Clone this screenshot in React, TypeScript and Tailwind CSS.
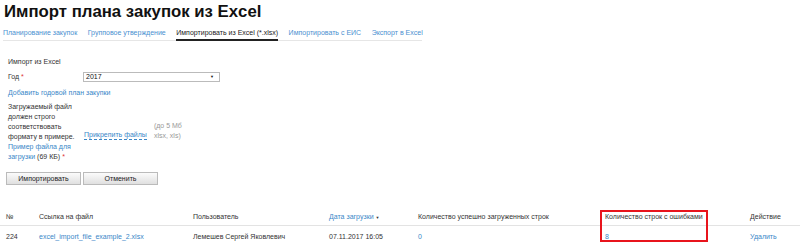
const tabs = [
  { name: 'Планирование закупок', active: false },
  { name: 'Групповое утверждение', active: false },
  { name: 'Импортировать из Excel (*.xlsx)', active: true },
  { name: 'Импортировать с ЕИС', active: false },
  { name: 'Экспорт в Excel', active: false },
]

const cols = ['w-[33px]', 'w-[154px]', 'w-[136px]', 'w-[89px]', 'w-[187px]', 'w-[145px]', 'w-[50px]']

export default function App() {
  return (
    <div className="relative w-[800px] h-[244px] overflow-hidden bg-white font-['Liberation_Sans',Arial,sans-serif] text-[7px] text-[#333]">
      <h1 className="pl-[4px] pt-[2px] text-[16.75px] font-bold leading-[20px] text-[#111]">
        Импорт плана закупок из Excel
      </h1>

      <nav className="mt-[6px] ml-[3px] flex w-[419px] gap-[10.5px] whitespace-nowrap border-b border-[#e6e6e6] leading-[10px]">
        {tabs.map((tab) => (
          <a
            key={tab.name}
            href="#"
            className={
              tab.active
                ? '-mb-px border-b-2 border-[#222] pb-[1px] text-[#222]'
                : 'pb-[2px] text-[#4a90d0]'
            }
          >
            {tab.name}
          </a>
        ))}
      </nav>

      <div className="pl-[8px] pt-[16px] leading-[10px]">
        <div>Импорт из Excel</div>

        <div className="mt-[5px] flex items-center">
          <span className="w-[75px]">
            Год <span className="text-[#d33]">*</span>
          </span>
          <div className="flex h-[10px] w-[137px] items-center justify-between border border-[#bbb] bg-white pl-[2px] pr-[5px] text-[#111]">
            2017
            <span className="text-[4px] leading-none">▼</span>
          </div>
        </div>

        <a href="#" className="mt-[6px] block text-[#3a87c8]">
          Добавить годовой план закупки
        </a>

        <div className="mt-[4px] flex items-center">
          <div className="w-[76px] whitespace-nowrap">
            Загружаемый файл
            <br />
            должен строго
            <br />
            соответствовать
            <br />
            формату в примере.
            <br />
            <a href="#" className="text-[#3a87c8]">
              Пример файла для
              <br />
              загрузки
            </a>{' '}
            (69 КБ) <span className="text-[#d33]">*</span>
          </div>
          <a href="#" className="mt-[6px] whitespace-nowrap border-b border-dashed border-[#3a87c8] leading-[8px] text-[#3a87c8]">
            Прикрепить файлы
          </a>
          <div className="ml-[7px] -mt-[2px] whitespace-nowrap leading-[10px] text-[#999]">
            (до 5 Мб
            <br />
            xlsx, xls)
          </div>
        </div>

        <div className="mt-[10px] -ml-[2px] flex gap-[2px]">
          <button className="h-[13px] w-[75px] border border-[#bbb] bg-gradient-to-b from-[#fbfbfb] to-[#e0e0e0] text-[7px] text-[#222]">
            Импортировать
          </button>
          <button className="h-[13px] w-[75px] border border-[#bbb] bg-gradient-to-b from-[#fbfbfb] to-[#e0e0e0] text-[7px] text-[#222]">
            Отменить
          </button>
        </div>
      </div>

      <div className="relative mt-[27px] whitespace-nowrap">
        <div className="flex border-b border-[#e3e3e3] pb-[2px] pl-[6px] leading-[10px]">
          <div className={cols[0]}>№</div>
          <div className={cols[1]}>Ссылка на файл</div>
          <div className={cols[2]}>Пользователь</div>
          <div className={`${cols[3]} text-[#3a87c8]`}>
            Дата загрузки <span className="text-[4px] text-[#333]">▼</span>
          </div>
          <div className={cols[4]}>Количество успешно загруженных строк</div>
          <div className={cols[5]}>Количество строк с ошибками</div>
          <div className={cols[6]}>Действие</div>
        </div>
        <div className="flex pl-[6px] pt-[6px] leading-[10px]">
          <div className={cols[0]}>224</div>
          <a href="#" className={`${cols[1]} text-[#3a87c8]`}>
            excel_import_file_example_2.xlsx
          </a>
          <div className={cols[2]}>Лемешев Сергей Яковлевич</div>
          <div className={cols[3]}>07.11.2017 16:05</div>
          <a href="#" className={`${cols[4]} text-[#3a87c8]`}>0</a>
          <a href="#" className={`${cols[5]} text-[#3a87c8]`}>8</a>
          <a href="#" className={`${cols[6]} text-[#3a87c8]`}>Удалить</a>
        </div>
        <div className="absolute left-[600px] top-[-2px] h-[32px] w-[108px] border-2 border-[#e8141c]" />
      </div>
    </div>
  )
}
